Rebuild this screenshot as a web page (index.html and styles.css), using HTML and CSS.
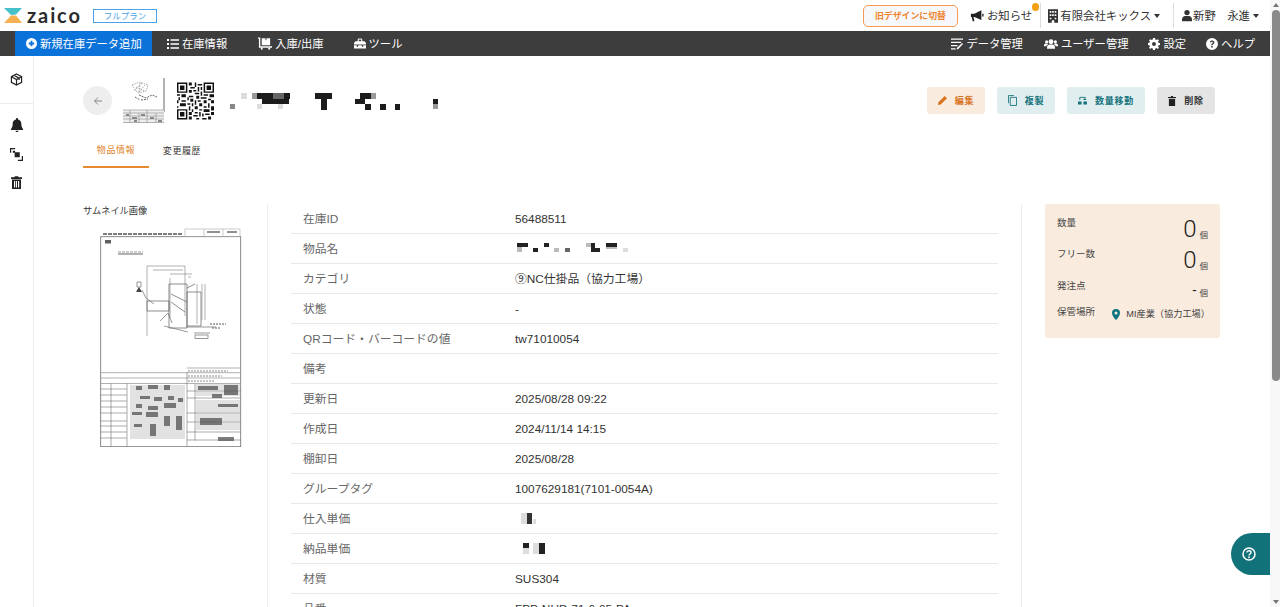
FILE: index.html
```html
<!DOCTYPE html>
<html lang="ja">
<head>
<meta charset="utf-8">
<title>zaico</title>
<link rel="stylesheet" href="styles.css">
</head>
<body>
<div class="page">
  <div class="viewport">
    <header class="topbar">
      <svg class="logo-mark" viewBox="0 0 18 16" width="18" height="16"><path d="M0 0h18l-6 6.500-5 .5z" fill="#45c1c9"/><path d="M0 15h18l-6-7.500H7z" fill="#f7b04f"/></svg>
      <span class="logo-text">zaico</span>
      <span class="plan">フルプラン</span>
      <span class="spacer"></span>
      <button class="old-design">旧デザインに切替</button>
      <span class="top-item notice">
        <svg class="ico" viewBox="0 0 16 16" width="14" height="14"><path d="M1 5.500h4L13 1.500v11L5 9H4l1 5H3L2 9H1zM14 5.500h1.500v3H14z" fill="#222"/></svg>お知らせ<i class="dot"></i>
      </span>
      <span class="top-item company">
        <svg class="ico" viewBox="0 0 12 16" width="10" height="14"><path d="M0 0h12v16H7.500v-3h-3v3H0zM2 2v2h2V2zm3 0v2h2V2zm3 0v2h2V2zM2 6v2h2V6zm3 0v2h2V6zm3 0v2h2V6zM2 10v2h2v-2zm6 0v2h2v-2z" fill="#333" fill-rule="evenodd"/></svg>有限会社キックス<i class="caret"></i>
      </span>
      <span class="top-item user">
        <svg class="ico" viewBox="0 0 12 14" width="10" height="13"><circle cx="6" cy="3.500" r="3.200" fill="#333"/><path d="M0 14v-2c0-3 2-4.500 3.500-4.500h5C10 7.500 12 9 12 12v2z" fill="#333"/></svg>新野　永進<i class="caret"></i>
      </span>
    </header>

    <nav class="navbar">
      <a class="nav-add">
        <svg class="nav-ico" viewBox="0 0 12 12" width="11" height="11"><path d="M6 0a6 6 0 100 12A6 6 0 006 0zM5 3h2v2h2v2H7v2H5V7H3V5h2z" fill="#fff" fill-rule="evenodd"/></svg>新規在庫データ追加
      </a>
      <a class="nav-item first">
        <svg class="nav-ico" viewBox="0 0 12 10" width="12" height="10"><path d="M0 0h2v2H0zM3.500 .2H12v1.600H3.500zM0 4h2v2H0zM3.500 4.200H12v1.600H3.500zM0 8h2v2H0zM3.500 8.200H12v1.600H3.500z" fill="#fff"/></svg>在庫情報
      </a>
      <a class="nav-item inout">
        <svg class="nav-ico" viewBox="0 0 15 13" width="14" height="13"><path d="M0 0h2.500v9.500H15V11H1V1.500H0zM4 1h4v2h1V1h4v7.500H4z" fill="#fff"/><circle cx="4" cy="12" r="1.100" fill="#fff"/><circle cx="12" cy="12" r="1.100" fill="#fff"/></svg>入庫/出庫
      </a>
      <a class="nav-item tool">
        <svg class="nav-ico" viewBox="0 0 13 11" width="12" height="11"><path d="M4 3V1.500C4 .7 4.700 0 5.500 0h2C8.300 0 9 .7 9 1.500V3h2.500L13 5v1.500H0V5l1.500-2zm1.200 0h2.600V1.200H5.200zM0 7.500h3V9h1.500V7.500h4V9H10V7.500h3V11H0z" fill="#fff" fill-rule="evenodd"/></svg>ツール
      </a>
      <span class="spacer"></span>
      <a class="nav-item data">
        <svg class="nav-ico" viewBox="0 0 13 12" width="12" height="12"><path d="M0 0h13v1.500H0zM0 3.500h11V5H0zM0 7h7v1.500H0zM0 10.500h5V12H0zM12 5l1 1-5 5.500-2 .5.500-2z" fill="#fff"/></svg>データ管理
      </a>
      <a class="nav-item users">
        <svg class="nav-ico" viewBox="0 0 16 11" width="14" height="10"><circle cx="3" cy="3" r="1.800" fill="#fff"/><circle cx="13" cy="3" r="1.800" fill="#fff"/><circle cx="8" cy="3" r="2.800" fill="#fff"/><path d="M3.500 11V9c0-2 1.500-3 3-3h3c1.500 0 3 1 3 3v2zM0 8V7c0-1 1-2 2-2h2l.5 1c-1 .5-1.700 1.200-2 2zM16 8V7c0-1-1-2-2-2h-2l-.5 1c1 .5 1.700 1.200 2 2z" fill="#fff"/></svg>ユーザー管理
      </a>
      <a class="nav-item settings">
        <svg class="nav-ico" viewBox="0 0 12 12" width="12" height="12"><path d="M5 0h2l.3 1.600 1.100.5L9.800 1.200l1.200 1.200-.9 1.400.5 1.100L12 5v2l-1.400.3-.5 1.100.9 1.400-1.200 1.200-1.400-.9-1.100.5L7 12H5l-.3-1.400-1.100-.5-1.400.9L1 9.800l.9-1.400-.5-1.100L0 7V5l1.400-.3.5-1.100L1 2.400l1.200-1.200 1.400.9 1.100-.5zM6 4a2 2 0 100 4 2 2 0 000-4z" fill="#fff" fill-rule="evenodd"/></svg>設定
      </a>
      <a class="nav-item help">
        <svg class="nav-ico" viewBox="0 0 12 12" width="12" height="12"><path d="M6 0a6 6 0 100 12A6 6 0 006 0zM5.200 7.200c0-1.700 1.700-1.600 1.700-2.600 0-.5-.4-.8-.9-.8-.6 0-.9.300-1.200.8l-1-.7C4.300 3 5 2.500 6.100 2.500c1.300 0 2.300.8 2.300 2 0 1.700-1.800 1.700-1.800 2.700zM5.100 8h1.600v1.500H5.100z" fill="#fff" fill-rule="evenodd"/></svg>ヘルプ
      </a>
    </nav>

    <div class="shell">
      <aside class="sidebar">
        <div class="side-top">
          <svg viewBox="0 0 14 14" width="13" height="13"><path d="M7 1l5.500 3v6L7 13l-5.500-3V4zM1.500 4L7 7l5.500-3M7 7v6M4.200 2.500L9.800 5.500v2" fill="none" stroke="#222" stroke-width="1.300"/></svg>
        </div>
        <div class="side-list">
          <svg viewBox="0 0 12 14" width="12" height="14"><path d="M6 0c.5 0 1 .4 1 1v.6c2 .4 3.300 2 3.300 4 0 3 .7 4 1.700 5.400v1H0v-1C1 9.600 1.700 8.600 1.700 5.600c0-2 1.300-3.600 3.300-4V1c0-.6.500-1 1-1zM4.500 12.700h3C7.500 13.500 6.800 14 6 14s-1.500-.5-1.500-1.300z" fill="#222"/></svg>
          <svg viewBox="0 0 14 14" width="13" height="13"><path d="M0 5V0h5.500v1.300H1.300V5zM3 3h2.500v2H3zM5 4.500h5.500V10H5zM14 8.500V14H8.500v-1.300h4.200V8.500z" fill="#222"/></svg>
          <svg viewBox="0 0 11 13" width="11" height="13"><path d="M0 1.300h3.200L4 .2h3l.8 1.100H11V3H0zM1 3.500h9V13H1zM3 5v6.500h1.200V5zm2 0v6.500h1V5zm2 0v6.500h1.200V5z" fill="#222" fill-rule="evenodd"/></svg>
        </div>
      </aside>

      <main class="content">
        <section class="head">
          <button class="back" aria-label="戻る">
            <svg viewBox="0 0 10 10" width="10" height="10"><path d="M9 5H1.500M5 1.500L1.500 5 5 8.500" fill="none" stroke="#888" stroke-width="1"/></svg>
          </button>
          <svg class="mini-thumb" viewBox="0 0 42 46" width="42" height="46">
            <defs><filter id="softer"><feGaussianBlur stdDeviation=".35"/></filter></defs>
            <rect width="42" height="46" fill="#fff"/>
            <g filter="url(#softer)">
              <path d="M41 0v34" stroke="#666" stroke-width="1"/>
              <path d="M9 7l8-3 8 3-2 6-8 2zM13 9l9 4M17 5l-1 10M11 13l8-8M22 7l-6 7" fill="none" stroke="#888" stroke-width=".7" stroke-dasharray="1.500 1"/>
              <path d="M16 17l7 3 6-3 5 2M18 22l7-1M12 19l5 3" fill="none" stroke="#555" stroke-width=".9" stroke-dasharray="2 1"/>
              <rect y="32" width="41" height="13" fill="#eee"/>
              <path d="M0 32h41M0 35h41M0 38h41M0 41h41M0 44.500h41" stroke="#888" stroke-width=".6"/>
              <path d="M7 32v13M16 35v10M24 32v13M33 35v10" stroke="#888" stroke-width=".6"/>
              <path d="M3 36h3v2H3zM9 39h5v2H9zM18 36h4v2h-4zM27 39h4v2h-4zM35 42h4v2h-4zM11 42h3v2h-3z" fill="#888"/>
            </g>
          </svg>
          <svg class="qr" viewBox="0 0 25 25" width="37" height="38">
            <path fill="#111" fill-rule="evenodd" d="M0 0h7v7H0zM1 1v5h5V1zM2 2h3v3H2zM18 0h7v7h-7zM19 1v5h5V1zM20 2h3v3h-3zM0 18h7v7H0zM1 19v5h5v-5zM2 20h3v3H2z"/>
            <path fill="#111" d="M8 0h2v2H8zM12 0h1v3h-1zM14 1h3v1h-3zM9 3h3v1H9zM14 3h1v3h-1zM16 3h1v2h-1zM8 5h2v2H8zM11 5h2v1h-2zM12 7h3v1h-3zM16 6h1v3h-1zM0 8h2v1H0zM3 8h3v2H3zM8 9h3v1H8zM13 9h2v2h-2zM18 8h3v1h-3zM22 8h3v2h-3zM1 10h1v2H1zM7 10h1v2H7zM9 11h2v2H9zM16 10h4v1h-4zM21 11h2v1h-2zM0 12h1v2H0zM3 12h3v1H3zM12 12h1v3h-1zM14 12h2v1h-2zM18 12h2v2h-2zM23 12h2v2h-2zM2 14h4v2H2zM7 14h2v1H7zM10 14h1v2h-1zM15 14h2v2h-2zM21 14h1v3h-1zM0 16h1v1H0zM8 16h1v3H8zM12 16h2v2h-2zM18 16h2v1h-2zM23 16h2v3h-2zM10 18h1v2h-1zM15 18h2v1h-2zM18 18h4v2h-4zM8 20h2v2H8zM12 20h2v1h-2zM15 20h1v3h-1zM23 20h2v2h-2zM11 22h3v1h-3zM17 21h1v2h-1zM19 21h3v1h-3zM8 23h2v2H8zM13 24h2v1h-2zM17 24h3v1h-3zM21 23h2v2h-2z"/>
          </svg>
          <svg class="title-mask" viewBox="0 0 210 18" width="210" height="18" shape-rendering="crispEdges">
            <path fill="#888" d="M0 11h5v5H0z"/><path fill="#ddd" d="M11 0h6v6h-6zM27 11h5v5h-5zM48 11h5v5h-5z"/><path fill="#999" d="M22 0h5v6h-5z"/>
            <path fill="#1c1c1c" d="M27 0h33v6H27zM32 6h11v5H32zM43 6h16v5H43zM85 0h17v6H85zM91 6h6v11h-6zM130 0h11v6h-11zM125 6h10v5h-10zM135 11h6v6h-6zM150 11h6v6h-6zM165 11h5v6h-5zM203 6h5v5h-5z"/>
            <path fill="#999" d="M141 0h5v6h-5zM203 11h5v5h-5z"/><path fill="#666" d="M43 0h11v6H43z"/>
          </svg>
          <span class="spacer"></span>
          <div class="actions">
            <button class="act act-edit"><svg viewBox="0 0 10 10" width="9" height="9"><path d="M7.500 0L10 2.500 3 9.500 0 10l.5-3z" fill="#d9731f"/></svg>編集</button>
            <button class="act act-copy"><svg viewBox="0 0 10 12" width="9" height="11"><path d="M.5 9V.5h6M2.500 2.500h7v9h-7z" fill="none" stroke="#17747d" stroke-width="1"/></svg>複製</button>
            <button class="act act-move"><svg viewBox="0 0 10 10" width="9" height="9"><path d="M2 4.500V1.500h6V3" fill="none" stroke="#17747d" stroke-width="1"/><path d="M0 6h4v3.500H0zM6 3h3v1.500H6zM6 6h4v3.500H6z" fill="#17747d"/></svg>数量移動</button>
            <button class="act act-del"><svg viewBox="0 0 9 11" width="8" height="10"><path d="M0 1h3l.5-1h2L6 1h3v1.200H0zM1 3h7v8H1z" fill="#222"/></svg>削除</button>
          </div>
        </section>

        <div class="tabs">
          <a class="tab active">物品情報</a>
          <a class="tab">変更履歴</a>
        </div>

        <section class="detail">
          <div class="thumb-col">
            <div class="thumb-label">サムネイル画像</div>
            <svg class="drawing" viewBox="0 0 142 221" width="142" height="221">
              <defs><filter id="soft"><feGaussianBlur stdDeviation=".5"/></filter></defs>
              <g filter="url(#soft)" opacity=".85">
                <rect x=".7" y="10.700" width="140" height="210" fill="none" stroke="#555" stroke-width=".8"/>
                <path d="M3 8h80" stroke="#666" stroke-width="2" stroke-dasharray="4 1"/>
                <rect x="85" y="3" width="55" height="7.500" fill="none" stroke="#999" stroke-width=".6"/>
                <path d="M104 3v7M123 3v7" stroke="#999" stroke-width=".6"/>
                <path d="M107 6h13M127 6h10" stroke="#555" stroke-width="1.600"/>
                <rect x="5" y="14" width="6" height="3.500" fill="#444"/>
                <path d="M18 28h25" stroke="#666" stroke-width="1.200"/>
                <path d="M18 26h25" stroke="#888" stroke-width="1.200" stroke-dasharray="3 1"/>
                <path d="M47 40h38M47 40v70M85 40v50M53 44h30M70 48h22M70 52v40M88 51h3" fill="none" stroke="#666" stroke-width=".6"/>
                <path d="M47 75h22v10H47zM69 58h18v44H69zM87 62l8-4M87 66h14v34H87zM71 68l16 8M71 76l14 10" fill="none" stroke="#444" stroke-width=".7"/>
                <path d="M97 58v40M102 58v36M105 58v36" stroke="#666" stroke-width=".6"/>
                <path d="M37 56h4v5h-4zM42 64l4 8 8 6M60 95l8-8 4 10M64 100l24 6M86 101h30M94 107h16" fill="none" stroke="#555" stroke-width=".7"/>
                <path d="M36 66l3-5 3 5z" fill="#222"/>
                <rect x="95" y="109" width="13" height="3.500" fill="none" stroke="#555" stroke-width=".7"/>
                <path d="M110 98h16M112 102h8" stroke="#444" stroke-width="1" stroke-dasharray="2 1"/>
                <path d="M.7 146.700h140M.7 152h140M.7 157.500h140M87 142h54" stroke="#666" stroke-width=".6"/>
                <path d="M88 145h40M88 150h34M88 155h26" stroke="#777" stroke-width="1" stroke-dasharray="2 1"/>
                <path d="M87 146v74.700M27 157.500v63M.7 163h26M.7 169h26M.7 175h26M.7 181h26M.7 187h26M.7 195h26M.7 200h26M.7 206h26M.7 212h26M87 165h54M87 172h54M87 187h54M87 196h54M87 206h54M87 214h54M11 157.500v63M95 157.500v57" stroke="#555" stroke-width=".6"/>
                <path fill="#bbb" opacity=".5" d="M30 159h55v54H30zM96 158h44v12H96zM96 174h44v30H96z"/>
                <path fill="#333" opacity=".75" d="M36 160h6v4h-6zM48 159h10v4H48zM64 159h6v5h-6zM40 170h10v3H40zM54 171h8v4h-8zM68 170h6v4h-6zM78 172h5v4h-5zM36 178h6v4h-6zM48 180h10v4H48zM64 177h12v5H64zM32 186h10v3H32zM46 186h12v5H46zM64 190h6v10h-6zM76 190h6v14h-6zM50 198h6v12h-6zM34 198h8v3h-8zM98 160h20v4H98zM124 159h14v10h-14zM112 168h10v4h-10zM118 178h20v3h-20zM100 192h22v7h-22zM118 211h16v4h-16z"/>
              </g>
            </svg>
          </div>

          <div class="table">
            <div class="row"><span class="k">在庫ID</span><span class="v">56488511</span></div>
            <div class="row"><span class="k">物品名</span><span class="v">
              <svg class="mask" viewBox="0 0 115 14" width="115" height="14" shape-rendering="crispEdges"><path fill="#222" d="M2 1h11v4H2zM18 6h5v4h-5zM29 1h5v4h-5zM76 1h4v9h-4zM80 6h5v4h-5zM91 1h11v4H91z"/><path fill="#bbb" d="M2 5h5v5H2zM39 6h5v4h-5zM71 1h5v4h-5zM91 5h11v2H91z"/><path fill="#666" d="M50 6h5v4h-5z"/><path fill="#ddd" d="M108 6h5v4h-5z"/></svg>
            </span></div>
            <div class="row"><span class="k">カテゴリ</span><span class="v">⑨NC仕掛品（協力工場）</span></div>
            <div class="row"><span class="k">状態</span><span class="v">-</span></div>
            <div class="row"><span class="k">QRコード・バーコードの値</span><span class="v">tw71010054</span></div>
            <div class="row"><span class="k">備考</span><span class="v"></span></div>
            <div class="row"><span class="k">更新日</span><span class="v">2025/08/28 09:22</span></div>
            <div class="row"><span class="k">作成日</span><span class="v">2024/11/14 14:15</span></div>
            <div class="row"><span class="k">棚卸日</span><span class="v">2025/08/28</span></div>
            <div class="row"><span class="k">グループタグ</span><span class="v">1007629181(7101-0054A)</span></div>
            <div class="row"><span class="k">仕入単価</span><span class="v">
              <svg class="mask" viewBox="0 0 22 14" width="22" height="14" shape-rendering="crispEdges"><path fill="#ddd" d="M6 1h6v11H6zM18 7h3v5h-3z"/><path fill="#333" d="M12 1h5v11h-5z"/></svg>
            </span></div>
            <div class="row"><span class="k">納品単価</span><span class="v">
              <svg class="mask" viewBox="0 0 32 14" width="32" height="14" shape-rendering="crispEdges"><path fill="#222" d="M8 1h6v5H8zM24 1h6v11h-6z"/><path fill="#ddd" d="M8 6h6v6H8zM18 1h6v11h-6z"/></svg>
            </span></div>
            <div class="row"><span class="k">材質</span><span class="v">SUS304</span></div>
            <div class="row"><span class="k">品番</span><span class="v">FPP-NUD-71-6-05-PA</span></div>
          </div>

          <div class="side-col">
            <div class="card">
              <div class="stat"><span class="s-k">数量</span><span class="s-v"><b>0</b><em>個</em></span></div>
              <div class="stat"><span class="s-k">フリー数</span><span class="s-v"><b>0</b><em>個</em></span></div>
              <div class="stat low"><span class="s-k">発注点</span><span class="s-v"><b class="dash">-</b><em>個</em></span></div>
              <div class="stat place"><span class="s-k">保管場所</span><span class="s-place">
                <svg viewBox="0 0 8 11" width="8" height="11"><path d="M4 0a4 4 0 014 4c0 2.500-2.500 5.500-4 7C2.500 9.500 0 6.500 0 4a4 4 0 014-4zm0 2.500a1.500 1.500 0 100 3 1.500 1.500 0 000-3z" fill="#0f7480" fill-rule="evenodd"/></svg>MI産業（協力工場）
              </span></div>
            </div>
          </div>
        </section>
      </main>
    </div>

    <button class="help-fab" aria-label="ヘルプ">
      <svg viewBox="0 0 14 14" width="14" height="14"><circle cx="7" cy="7" r="6" fill="none" stroke="#fff" stroke-width="1.500"/><path d="M5 5.500C5 4.300 6 3.800 7 3.800s2 .6 2 1.700C9 7 7 7 7 8.500" fill="none" stroke="#fff" stroke-width="1.400"/><rect x="6.200" y="9.500" width="1.600" height="1.600" fill="#fff"/></svg>
    </button>
  </div>

  <div class="scrollbar">
    <i class="arrow up"></i>
    <span class="thumb"></span>
    <i class="arrow down"></i>
  </div>
</div>
</body>
</html>
```

FILE: styles.css
```css
* { box-sizing: border-box; }
html, body { margin: 0; height: 100%; overflow: hidden; background: #fff; }
body { font-family: "Liberation Sans", "Noto Sans CJK JP", sans-serif; font-size: 11.800px; line-height: 14px; color: #333; }
button { font-family: inherit; cursor: pointer; }
a { display: flex; align-items: center; color: inherit; }
svg { display: block; flex: none; }
.page { display: flex; width: 1280px; height: 607px; }
.viewport { position: relative; width: 1270px; height: 607px; display: flex; flex-direction: column; overflow: hidden; }
.spacer { flex: 1; }

.scrollbar { width: 10px; background: #f8f8f8; display: flex; flex-direction: column; align-items: center; padding: 3px 0 3px 1px; }
.thumb { width: 8px; height: 371px; margin-top: 3px; background: #8a8a8a; border-radius: 4px; }
.arrow { width: 0; height: 0; border: 3px solid transparent; border-top-width: 0; }
.arrow.up { border-bottom: 4px solid #777; }
.arrow.down { border-top: 4px solid #777; border-bottom-width: 0; margin-top: auto; }

.topbar { height: 31px; flex: none; display: flex; align-items: center; padding-left: 4px; background: #fff; }
.logo-mark { margin-right: 5px; }
.logo-text { font-family: "Lato", sans-serif; font-size: 20px; font-weight: 700; letter-spacing: 1.900px; color: #2b2b2b; width: 53px; line-height: 1; margin-bottom: 2px; }
.plan { margin-left: 13px; width: 64px; height: 14px; border: 1px solid #4aa3ea; color: #4aa3ea; font-size: 8.500px; line-height: 12px; text-align: center; }
.old-design { width: 95px; height: 22px; padding: 0; border: 1.500px solid #f59a55; border-radius: 5px; background: #f7f8fb; color: #f0852f; font-size: 8.900px; font-weight: 700; }
.top-item { position: relative; display: flex; align-items: center; height: 25px; font-size: 11.400px; color: #333; }
.notice { margin-left: 12px; padding-right: 5px; gap: 3px; border-right: 1px solid #ddd; }
.dot { position: absolute; right: 1px; top: 0; width: 7.500px; height: 7.500px; border-radius: 50%; background: #f5a113; }
.company { padding: 0 13px 0 7px; gap: 2px; border-right: 1px solid #ddd; }
.user { padding: 0 11px 0 8px; gap: 1px; }
.caret { width: 0; height: 0; margin-left: 2px; border: 3.500px solid transparent; border-bottom-width: 0; border-top: 4px solid #333; }
.company .caret { margin-left: 1px; }

.navbar { height: 25px; flex: none; display: flex; align-items: stretch; padding-left: 15px; padding-right: 15px; background: #3d3d3d; color: #fff; font-size: 11.300px; }
.nav-add { width: 137px; background: #0a72d8; padding-left: 11px; gap: 3px; }
.nav-item { gap: 3px; }
.first { margin-left: 15px; }
.inout { margin-left: 31px; }
.tool { margin-left: 30px; }
.users { margin-left: 21px; }
.settings { margin-left: 20px; }
.help { margin-left: 20px; }

.shell { flex: 1; display: flex; min-height: 0; }
.sidebar { width: 34px; flex: none; border-right: 1px solid #ececec; }
.side-top { height: 48px; display: flex; align-items: center; justify-content: center; border-bottom: 1px solid #ececec; }
.side-list { display: flex; flex-direction: column; align-items: center; gap: 15.500px; padding-top: 14px; }

.content { flex: 1; padding: 30px 55px 0 49px; overflow: hidden; }
.head { display: flex; align-items: center; height: 29px; }
.back { width: 29px; height: 29px; padding: 0; border: 0; border-radius: 50%; background: #eee; display: flex; align-items: center; justify-content: center; }
.mini-thumb { margin: -8px 0 -8px 11px; }
.qr { margin-left: 12px; margin-top: -2px; margin-bottom: -2px; }
.title-mask { margin-left: 16px; margin-top: 2px; }
.actions { display: flex; gap: 12px; }
.act { height: 27px; padding: 0; border: 0; border-radius: 3px; display: flex; align-items: center; justify-content: center; gap: 8px; font-size: 9px; font-weight: 700; letter-spacing: .8px; }
.act-edit { width: 58px; background: #faebdf; color: #d9731f; }
.act-copy { width: 58px; background: #e0eef0; color: #17747d; }
.act-move { width: 78px; background: #e0eef0; color: #17747d; }
.act-del { width: 58px; background: #e4e4e4; color: #333; }

.tabs { display: flex; margin-top: 20px; height: 33px; }
.tab { width: 66px; justify-content: center; padding-bottom: 2px; font-size: 9px; letter-spacing: .6px; color: #333; }
.active { color: #e07f28; border-bottom: 2px solid #e68a32; }

.detail { display: flex; margin-top: 36px; align-items: stretch; height: 420px; }
.thumb-col { width: 185px; flex: none; border-right: 1px solid #eee; }
.thumb-label { font-size: 9.200px; line-height: 14px; color: #333; }
.drawing { margin: 8px 0 0 17px; }
.table { width: 707px; margin-left: 23px; flex: none; }
.row { height: 30px; display: flex; align-items: center; padding: 0 0 0 12px; border-bottom: 1px solid #e9e9e9; }
.k { width: 212px; flex: none; color: #666; }
.v { color: #333; display: flex; align-items: center; }
.side-col { margin-left: 23px; padding-left: 23px; border-left: 1px solid #eee; flex: none; }
.card { width: 175px; height: 134px; background: #faebdf; border-radius: 3px; padding: 11px 12px 0; }
.stat { display: flex; justify-content: space-between; height: 31px; font-size: 9.500px; color: #444; }
.s-k { line-height: 16px; }
.s-v { display: flex; align-items: flex-end; height: 28px; gap: 3px; }
.s-v b { font-family: "Roboto", sans-serif; font-size: 24px; font-weight: 300; line-height: 28px; color: #222; }
.s-v em { font-style: normal; font-size: 8.500px; line-height: 15px; }
.s-v b.dash { font-size: 14px; line-height: 22px; font-weight: 400; }
.low { height: 26px; margin-top: 1px; }
.low .s-v { height: 23px; }
.place { align-items: flex-start; }
.s-place { display: flex; align-items: center; gap: 6px; margin-top: 3px; margin-right: -2px; font-size: 9.200px; line-height: 14px; }

.help-fab { position: absolute; right: 0; top: 533px; width: 39px; height: 42px; padding: 0 3px 0 0; border: 0; border-radius: 21px 0 0 21px; background: #12727a; display: flex; align-items: center; justify-content: center; }
```
